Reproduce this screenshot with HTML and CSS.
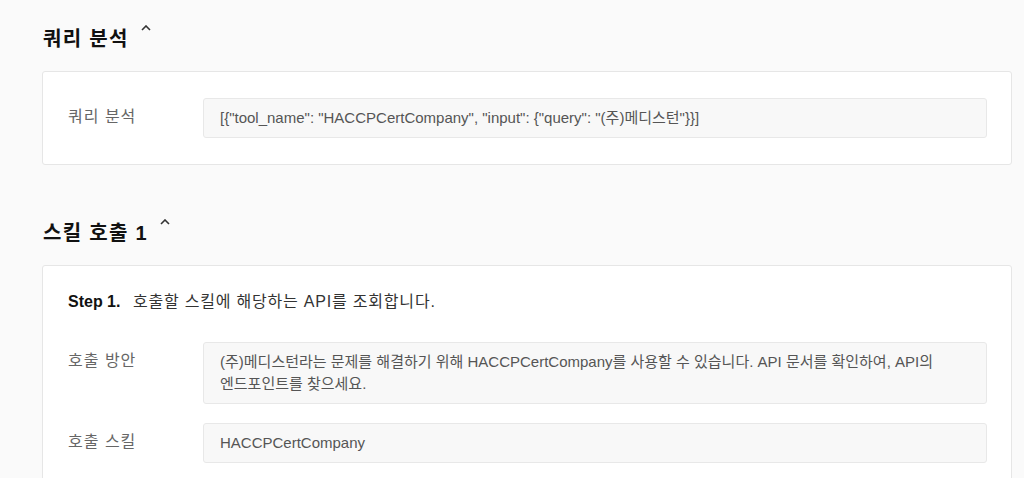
FILE: index.html
```html
<!DOCTYPE html>
<html lang="ko">
<head>
  <meta charset="UTF-8" />
  <title>스킬 실행 결과</title>
  <link rel="stylesheet" href="styles.css">
</head>
<body>

<div id="page">
  <!-- 쿼리 분석 -->
  <div class="section">
    <h2 class="section-title">
      쿼리 분석
      <svg class="caret" width="10" height="6" viewBox="0 0 10 6"><path d="M1 5 L5 1 L9 5" fill="none" stroke="#333" stroke-width="1.6"/></svg>
    </h2>
    <div class="card">
      <div class="row">
        <div class="label">쿼리 분석</div>
        <div class="field">[{"tool_name": "HACCPCertCompany", "input": {"query": "(주)메디스턴"}}]</div>
      </div>
    </div>
  </div>

  <!-- 스킬 호출 1 -->
  <div class="section">
    <h2 class="section-title">
      스킬 호출 1
      <svg class="caret" width="10" height="6" viewBox="0 0 10 6"><path d="M1 5 L5 1 L9 5" fill="none" stroke="#333" stroke-width="1.6"/></svg>
    </h2>
    <div class="card">
      <div class="step">
        <span class="step-no">Step 1.</span>
        <span class="step-text">호출할 스킬에 해당하는 API를 조회합니다.</span>
      </div>
      <div class="row">
        <div class="label">호출 방안</div>
        <div class="field">(주)메디스턴라는 문제를 해결하기 위해 HACCPCertCompany를 사용할 수 있습니다. API 문서를 확인하여, API의<br>엔드포인트를 찾으세요.</div>
      </div>
      <div class="row">
        <div class="label">호출 스킬</div>
        <div class="field">HACCPCertCompany</div>
      </div>
    </div>
  </div>
</div>

</body>
</html>
```

FILE: styles.css
```css
* {
  box-sizing: border-box;
}

body {
  margin: 0;
  background-color: #fafafa;
  font-family: 'Liberation Sans', 'Noto Sans CJK KR', sans-serif;
  color: #333;
}

#page {
  padding: 25px 12px 0 42px;
}

/* 섹션 */
.section {
  margin-bottom: 54px;
}

.section-title {
  display: flex;
  align-items: flex-start;
  gap: 12px;
  margin: 0 0 18px 1px;
  font-size: 20px;
  line-height: 28px;
  font-weight: bold;
  letter-spacing: 1.3px;
  color: #111;
}

.caret {
  margin-top: 0;
}

.card {
  background-color: white;
  border: 1px solid #e6e6e6;
  border-radius: 3px;
  padding: 26px 24px 26px 25px;
}

.row {
  display: flex;
  align-items: flex-start;
}

.row + .row {
  margin-top: 19px;
}

.label {
  width: 135px;
  flex-shrink: 0;
  padding-top: 8px;
  font-size: 16px;
  line-height: 22px;
  letter-spacing: 1px;
  color: #666;
}

.field {
  flex: 1;
  background-color: #f8f8f8;
  border: 1px solid #e8e8e8;
  border-radius: 3px;
  padding: 8px 16px;
  font-size: 15px;
  line-height: 22px;
  color: #555;
}

/* Step */
.step {
  margin: -1px 0 29px;
  line-height: 22px;
}

.step-no {
  font-size: 16px;
  font-weight: bold;
  color: #111;
  margin-right: 8px;
}

.step-text {
  font-size: 16px;
  letter-spacing: 0.8px;
  color: #333;
}
```
